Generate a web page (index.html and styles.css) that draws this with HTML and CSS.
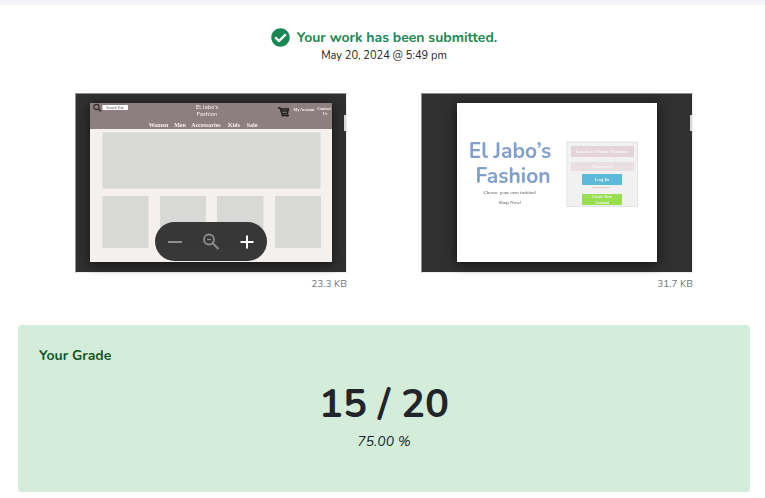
FILE: index.html
```html
<!DOCTYPE html>
<html lang="en">
<head>
<meta charset="utf-8">
<meta name="viewport" content="width=device-width, initial-scale=1">
<title>Submission</title>
<link rel="stylesheet" href="styles.css">
</head>
<body>
<main class="card">
  <header class="status">
    <h1 class="status-title">
      <svg class="status-icon" viewBox="0 0 512 512" aria-hidden="true"><path fill="currentColor" d="M504 256c0 137-111 248-248 248S8 393 8 256 119 8 256 8s248 111 248 248zM227.300 387.300l184-184c6.200-6.200 6.200-16.400 0-22.600l-22.600-22.600c-6.200-6.200-16.400-6.200-22.600 0L216 308.100l-70.100-70.100c-6.200-6.200-16.400-6.200-22.600 0l-22.600 22.600c-6.200 6.200-6.200 16.400 0 22.600l104 104c6.200 6.300 16.400 6.300 22.600.1z"/></svg>
      <span>Your work has been submitted.</span>
    </h1>
    <time class="status-date" datetime="2024-05-20T17:49">May 20, 2024 @ 5:49 pm</time>
  </header>

  <section class="files">
    <figure class="file">
      <div class="viewer">
        <svg class="sheet" viewBox="0 0 242 159" role="img" aria-label="Shop home page">
          <rect width="242" height="159" fill="#f3f0ed"/>
          <rect width="242" height="26" fill="#8d7f7f"/>
          <g fill="none" stroke="#332c2c"><circle cx="6.500" cy="4" r="2.600" stroke-width="1.100"/><path d="M8.500 6l2.500 2.500" stroke-width="1.600"/></g>
          <rect x="12.500" y="2" width="25.500" height="5" fill="#fff"/>
          <text class="serif" x="25" y="6" font-size="4" fill="#555">Search Bar</text>
          <g class="round" fill="#f4efef" font-size="6"><text x="117" y="6">El Jabo’s</text><text x="117" y="13">Fashion</text></g>
          <path d="M188 5h2l2.500 7.500h6.500M190.500 6h8l-1 4.500h-5.500M191 8h7" fill="none" stroke="#241f1f" stroke-width="1.300"/>
          <circle cx="192.500" cy="12.500" r="1" fill="#241f1f"/><circle cx="197.500" cy="12.500" r="1" fill="#241f1f"/>
          <g class="serif bold" fill="#f4efef" font-size="4"><text x="214" y="8">My Account</text><text x="234" y="7">Contact</text><text x="235" y="12">Us</text></g>
          <g class="serif bold" fill="#f4efef" font-size="6"><text x="68.500" y="24">Women</text><text x="90" y="24">Men</text><text x="116" y="24">Accessories</text><text x="144" y="24">Kids</text><text x="162" y="24">Sale</text></g>
          <g fill="#d8d8d7"><rect x="12.500" y="29.500" width="218" height="56"/><rect x="12.500" y="93" width="46" height="52"/><rect x="70" y="93" width="46" height="52"/><rect x="127" y="93" width="46.500" height="52"/><rect x="185" y="93" width="46" height="52"/></g>
        </svg>
        <span class="thumb"></span>
        <div class="zoom">
          <button type="button" class="zoom-btn" aria-label="Zoom out"><svg viewBox="0 0 20 20"><path d="M3 10h14" stroke="currentColor" stroke-width="2"/></svg></button>
          <button type="button" class="zoom-btn" aria-label="Reset zoom"><svg viewBox="0 0 20 20" fill="none" stroke="currentColor"><circle cx="8" cy="7.500" r="5" stroke-width="1.800"/><path d="M11.500 11l6 6" stroke-width="2"/><path d="M6 7.500h4" stroke-width="1.200"/></svg></button>
          <button type="button" class="zoom-btn zoom-in" aria-label="Zoom in"><svg viewBox="0 0 20 20"><path d="M3.500 10h13M10 3.500v13" stroke="currentColor" stroke-width="2"/></svg></button>
        </div>
      </div>
      <figcaption class="file-size">23.3 KB</figcaption>
    </figure>

    <figure class="file">
      <div class="viewer">
        <svg class="sheet" viewBox="0 0 242 159" role="img" aria-label="Shop login page">
          <rect x="21" width="200" height="159" fill="#fff"/>
          <g class="round bold" fill="#819fcd" font-size="21"><text x="74" y="55">El Jabo’s</text><text x="77" y="80">Fashion</text></g>
          <g class="serif" fill="#555" font-size="5"><text x="74" y="91">Choose your own fashion!</text><text x="74" y="101">Shop Now!</text></g>
          <rect x="131" y="39" width="70.500" height="64.500" fill="#f1f1f1" stroke="#e4e4e4"/>
          <rect x="135" y="43" width="63" height="11" fill="#e3d5d7"/><rect x="135" y="59" width="63" height="9" fill="#e9dfe0"/>
          <rect x="146" y="71" width="40" height="11" fill="#5bbada"/><rect x="146" y="91" width="40" height="11" fill="#99df52"/>
          <path d="M156 84.500h18" stroke="#e6cdd0" stroke-width="1"/>
          <g class="serif bold" fill="#f8f3f3" font-size="4"><text x="166" y="50" font-size="5">Email or Phone Number</text><text x="166" y="65" font-size="5">Password</text><text x="166" y="78" font-size="5">Log In</text><text x="166" y="95">Create New</text><text x="166" y="101">Account</text></g>
        </svg>
        <span class="thumb"></span>
      </div>
      <figcaption class="file-size">31.7 KB</figcaption>
    </figure>
  </section>

  <section class="grade">
    <h2 class="grade-title">Your Grade</h2>
    <p class="grade-score">15 / 20</p>
    <p class="grade-percent">75.00 %</p>
  </section>
</main>
</body>
</html>
```

FILE: styles.css
```css
* {
  box-sizing: border-box;
}

body {
  margin: 0;
  padding-top: 5px;
  background: #f3f4f9;
  color: #212529;
  font-family: Nunito, Lato, sans-serif;
}

h1, h2, p, figure {
  margin: 0;
}

.card {
  padding: 22px 15px 6px 18px;
  background: #fff;
}

.status {
  display: flex;
  flex-direction: column;
  align-items: center;
}

.status-title {
  display: flex;
  align-items: center;
  gap: 7px;
  color: #198754;
  font-size: 14px;
  font-weight: 700;
  line-height: 21px;
}

.status-icon {
  width: 19px;
  height: 19px;
}

.status-date {
  font-size: 11px;
  line-height: 16px;
}

.files {
  display: grid;
  grid-template-columns: 1fr 1fr;
  padding: 29px 20px 0;
}

.file {
  padding: 0 37px;
}

.viewer {
  position: relative;
  padding: 9px 14px 10px;
  background: #303030;
  border: 1px solid;
  border-color: #8f9390 #eee #eee #8f9390;
}

.sheet {
  display: block;
  width: 100%;
  filter: drop-shadow(0 2px 6px #111);
}

.sheet text {
  text-anchor: middle;
}

.serif {
  font-family: "Liberation Serif", serif;
}

.round {
  font-family: Nunito, Lato, sans-serif;
}

.bold {
  font-weight: 700;
}

.thumb {
  position: absolute;
  top: 21px;
  right: 0;
  width: 2px;
  height: 16px;
  background: #d8d8d8;
}

.zoom {
  position: absolute;
  bottom: 11px;
  left: 50%;
  display: flex;
  justify-content: space-between;
  width: 112px;
  height: 39px;
  padding: 0 10px;
  transform: translateX(-50%);
  background: rgba(50, 50, 50, 0.97);
  border-radius: 20px;
}

.zoom-btn {
  display: grid;
  place-items: center;
  width: 20px;
  padding: 0;
  background: none;
  border: 0;
  color: #8d8d8d;
}

.zoom-btn svg {
  width: 20px;
  height: 20px;
}

.zoom-in {
  color: #fff;
}

.file-size {
  padding-top: 3px;
  color: #6c757d;
  font-size: 10px;
  line-height: 16px;
  text-align: right;
}

.grade {
  min-height: 167px;
  margin-top: 33px;
  padding: 20px 21px;
  background: #d4edda;
  border-radius: 4px;
  text-align: center;
}

.grade-title {
  color: #155724;
  font-size: 14px;
  font-weight: 700;
  line-height: 21px;
  text-align: left;
}

.grade-score {
  margin-top: 10px;
  font-size: 40px;
  font-weight: 700;
  line-height: 56px;
}

.grade-percent {
  font-size: 14px;
  font-style: italic;
  line-height: 20px;
}
```
